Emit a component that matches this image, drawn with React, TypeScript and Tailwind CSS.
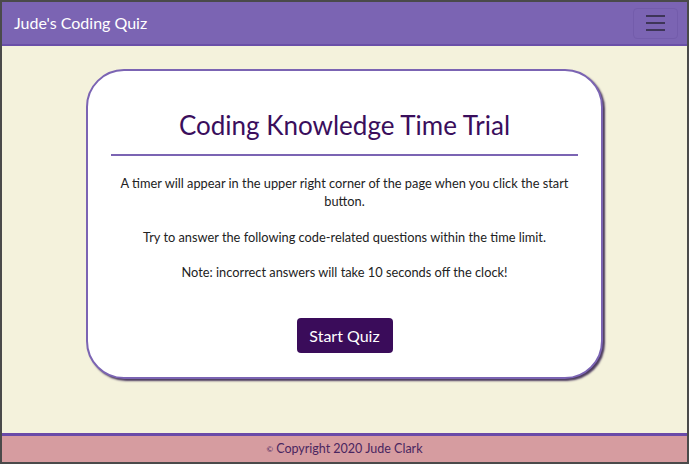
import React from 'react';

const App: React.FC = () => {
  return (
    <div className="h-[464px] w-[689px] border-2 border-[#4a4a4a] bg-[#f4f2dc] flex flex-col font-['Lato',sans-serif] overflow-hidden">
      {/* Navbar */}
      <nav className="h-[44px] bg-[#7b64b3] border-b-2 border-[#6a50a8] flex items-center justify-between pl-[12px] pr-[9px] shrink-0">
        <span className="text-white text-[16px]">Jude's Coding Quiz</span>
        <button className="w-[45px] h-[31px] rounded-[4px] border border-[#735cab] flex flex-col items-center justify-center gap-[5px]">
          <span className="block w-[19px] h-[2px] bg-[#3e3558]" />
          <span className="block w-[19px] h-[2px] bg-[#3e3558]" />
          <span className="block w-[19px] h-[2px] bg-[#3e3558]" />
        </button>
      </nav>

      {/* Main */}
      <main className="flex-1 flex justify-center pt-[23px]">
        <div className="w-[517px] h-[310px] bg-white border-2 border-[#7b64b3] rounded-[38px] shadow-[2px_2px_2px_#4b3a5e] flex flex-col items-center px-[23px]">
          <h1 className="mt-[41px] text-[26px] text-[#3a0e5c] leading-none">Coding Knowledge Time Trial</h1>
          <hr className="w-full mt-[16px] border-0 h-[2px] bg-[#7b64b3]" />
          <div className="mt-[18px] text-[12.8px] text-[#222] text-center leading-[18px] flex flex-col gap-[17.5px] px-[4px]">
            <p>A timer will appear in the upper right corner of the page when you click the start button.</p>
            <p>Try to answer the following code-related questions within the time limit.</p>
            <p>Note: incorrect answers will take 10 seconds off the clock!</p>
          </div>
          <button className="mt-[37px] w-[96px] h-[35px] bg-[#3a0c5a] text-white text-[16px] rounded-[4px]">Start Quiz</button>
        </div>
      </main>

      {/* Footer */}
      <footer className="h-[29px] shrink-0 border-t-[3px] border-[#6a4aa8] bg-[#d69ca0] flex items-center justify-center text-[12.5px] text-[#4a2660]">
        <span className="text-[8px] mr-[3px]">©</span>Copyright 2020 Jude Clark
      </footer>
    </div>
  );
};

export default App;
